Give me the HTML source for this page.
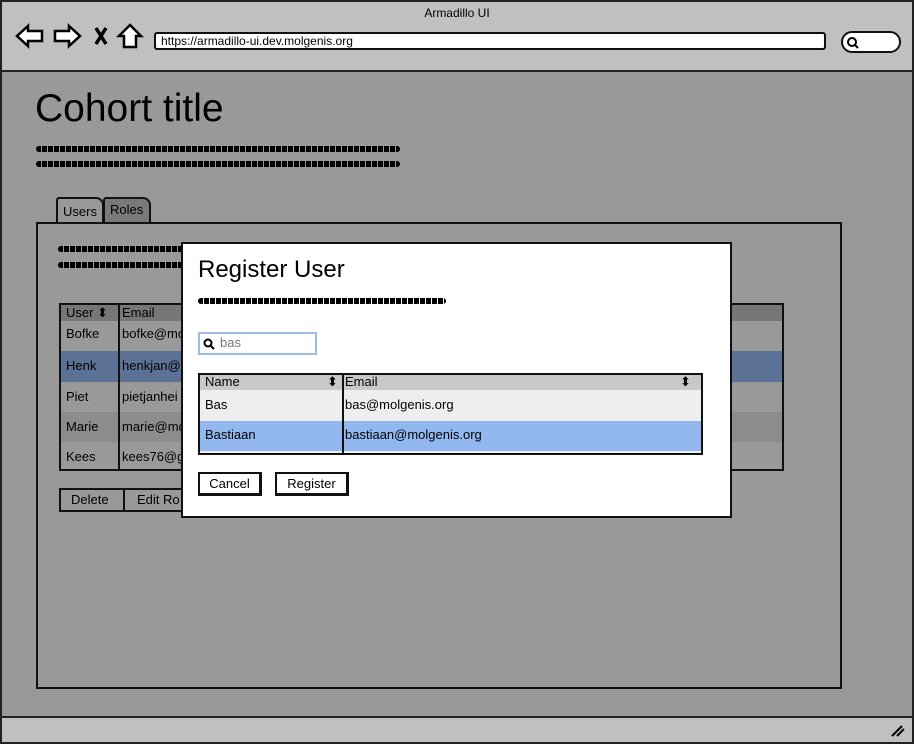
<!DOCTYPE html>
<html><head><meta charset="utf-8"><style>
*{box-sizing:border-box;margin:0;padding:0}
body{width:914px;height:744px;position:relative;overflow:hidden;font-family:"Liberation Sans",sans-serif;background:#999;color:#000}
.a{position:absolute}
.sq{display:block;height:6px;background:repeating-linear-gradient(90deg,#000 0 5px,transparent 5px 6px);border-radius:3px}
</style></head><body>
<div class="a" style="left:0;top:0;width:914px;height:744px;border:2px solid #222;"></div>
<div class="a" style="left:2px;top:2px;width:910px;height:70px;background:#c0c0c0;border-bottom:2px solid #222"></div>
<div class="a" style="left:0;top:6px;width:914px;text-align:center;font-size:12px">Armadillo UI</div>
<svg class="a" style="left:14px;top:22px" width="130" height="30" viewBox="0 0 130 30" fill="none" stroke="#000" stroke-width="2.5">
<path d="M3 14 L14 4 L14 9 L28 9 L28 19 L14 19 L14 24 Z" fill="#fff"/>
<path d="M66 14 L55 4 L55 9 L41 9 L41 19 L55 19 L55 24 Z" fill="#fff"/>
<path d="M82 6 L92 22 M92 6 L82 22" stroke-width="3.5"/>
<path d="M116 3 L105 14 L110 14 L110 25 L122 25 L122 14 L127 14 Z" fill="#fff"/>
</svg>
<div class="a" style="left:154px;top:32px;width:672px;height:18px;background:#fff;border:2px solid #111;border-radius:3px;font-size:12px;padding-left:5px;line-height:14px">https://armadillo-ui.dev.molgenis.org</div>
<div class="a" style="left:841px;top:31px;width:60px;height:22px;background:#fff;border:2px solid #111;border-radius:11px"></div>
<svg class="a" style="left:846px;top:36px" width="14" height="14" fill="none" stroke="#000" stroke-width="2"><circle cx="6" cy="6" r="4"/><path d="M9 9 L12 12"/></svg>
<div class="a" style="left:2px;top:716px;width:910px;height:26px;background:#c0c0c0;border-top:2px solid #222"></div>
<svg class="a" style="left:890px;top:724px" width="16" height="14" stroke="#000" stroke-width="2"><path d="M2 12 L12 2 M7 12 L14 5"/></svg>

<div class="a" style="left:35px;top:87px;font-size:39px">Cohort title</div>
<div class="a" style="left:36px;top:146px;width:364px"><span class="sq"></span></div>
<div class="a" style="left:36px;top:161px;width:364px"><span class="sq"></span></div>
<div class="a" style="left:56px;top:197px;width:48px;height:27px;background:#999;border:2px solid #111;border-bottom:none;border-radius:3px 8px 0 0;font-size:13px;padding:5px 0 0 5px">Users</div>
<div class="a" style="left:103px;top:197px;width:48px;height:25px;background:#7a7a7a;border:2px solid #111;border-bottom:none;border-radius:3px 8px 0 0;font-size:13px;padding:3px 0 0 5px">Roles</div>
<div class="a" style="left:36px;top:222px;width:806px;height:467px;border:2px solid #111"></div>
<div class="a" style="left:58px;top:246px;width:130px"><span class="sq"></span></div>
<div class="a" style="left:58px;top:262px;width:130px"><span class="sq"></span></div>

<div class="a" style="left:59px;top:303px;width:725px;height:168px;border:2px solid #111;background:#999;font-size:13px">
 <div class="a" style="left:0;top:0;width:721px;height:16px;background:#777"></div>
 <div class="a" style="left:0;top:46px;width:721px;height:31px;background:#5b7195"></div>
 <div class="a" style="left:0;top:107px;width:721px;height:30px;background:#8c8c8c"></div>
 <div class="a" style="left:57px;top:0;width:2px;height:164px;background:#111"></div>
 <div class="a" style="left:5px;top:0">User ⬍</div><div class="a" style="left:61px;top:0">Email</div>
 <div class="a" style="left:5px;top:21px">Bofke</div><div class="a" style="left:61px;top:21px">bofke@mo</div>
 <div class="a" style="left:5px;top:53px">Henk</div><div class="a" style="left:61px;top:53px">henkjan@z</div>
 <div class="a" style="left:5px;top:84px">Piet</div><div class="a" style="left:61px;top:84px">pietjanhei</div>
 <div class="a" style="left:5px;top:114px">Marie</div><div class="a" style="left:61px;top:114px">marie@mo</div>
 <div class="a" style="left:5px;top:144px">Kees</div><div class="a" style="left:61px;top:144px">kees76@g</div>
</div>
<div class="a" style="left:59px;top:488px;width:130px;height:24px;border:2px solid #111;font-size:13px;background:#999">
 <div class="a" style="left:10px;top:2px">Delete</div>
 <div class="a" style="left:62px;top:0;width:2px;height:20px;background:#111"></div>
 <div class="a" style="left:76px;top:2px">Edit Ro</div>
</div>

<div class="a" style="left:181px;top:242px;width:551px;height:276px;background:#fff;border:2px solid #111">
 <div class="a" style="left:15px;top:12px;font-size:24px">Register User</div>
 <div class="a" style="left:15px;top:54px;width:248px"><span class="sq"></span></div>
 <div class="a" style="left:15px;top:88px;width:119px;height:23px;border:2px solid #9cbbea;font-size:13px;color:#777;padding:1px 0 0 20px">bas</div>
 <svg class="a" style="left:20px;top:94px" width="12" height="12" fill="none" stroke="#000" stroke-width="2"><circle cx="5" cy="5" r="3.5"/><path d="M7.5 7.5 L11 11"/></svg>
 <div class="a" style="left:15px;top:129px;width:505px;height:82px;border:2px solid #111;background:#eee;font-size:13px">
  <div class="a" style="left:0;top:0;width:501px;height:15px;background:#c8c8c8"></div>
  <div class="a" style="left:0;top:46px;width:501px;height:30px;background:#92b8ef"></div>
  <div class="a" style="left:142px;top:0;width:2px;height:78px;background:#111"></div>
  <div class="a" style="left:5px;top:-1px">Name</div><div class="a" style="left:127px;top:-1px">⬍</div>
  <div class="a" style="left:145px;top:-1px">Email</div><div class="a" style="left:480px;top:-1px">⬍</div>
  <div class="a" style="left:5px;top:22px">Bas</div><div class="a" style="left:145px;top:22px">bas@molgenis.org</div>
  <div class="a" style="left:5px;top:52px">Bastiaan</div><div class="a" style="left:145px;top:52px">bastiaan@molgenis.org</div>
 </div>
 <div class="a" style="left:15px;top:228px;width:64px;height:24px;border:2px solid #111;border-right-width:3px;border-bottom-width:3px;font-size:13px;text-align:center;padding-top:2px">Cancel</div>
 <div class="a" style="left:92px;top:228px;width:74px;height:24px;border:2px solid #111;border-right-width:3px;border-bottom-width:3px;font-size:13px;text-align:center;padding-top:2px">Register</div>
</div>
</body></html>
